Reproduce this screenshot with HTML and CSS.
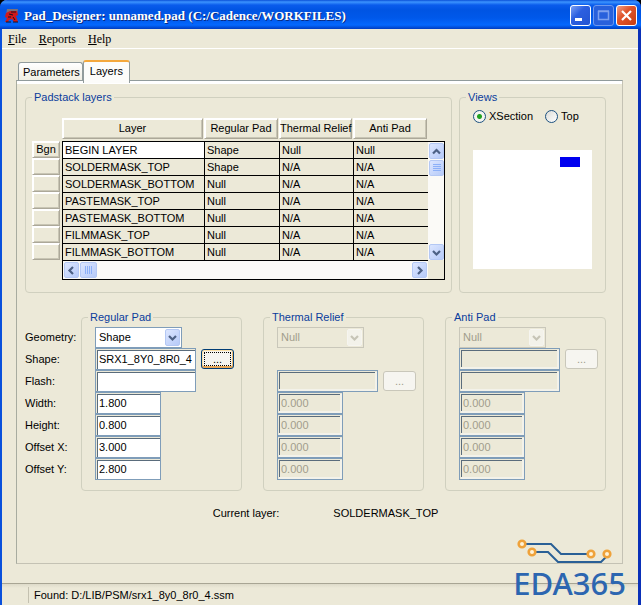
FILE: index.html
```html
<!DOCTYPE html>
<html lang="en">
<head>
    <meta charset="UTF-8">
    <meta name="viewport" content="width=device-width, initial-scale=1.0">
    <title>Pad_Designer: unnamed.pad</title>
    <link rel="stylesheet" href="styles.css">
</head>
<body>

    <div class="window">
        <header class="titlebar">
            <svg class="app-icon" width="14" height="14" viewBox="0 0 14 14">
                <path d="M2 0h11l-1 6H1z" fill="#7d7078"/>
                <path d="M1 4l4 -2 7 0 1 4 -2 1 2 6h-4l-2 -3 -3 1 -1 2H0l2 -4 -2 -1z" fill="#d01818"/>
                <path d="M4 5l4 1M8 8l2 3M3 8l3 0M6 3l5 0M1 13h5M8 13h5" stroke="#1a1020" stroke-width="1"/>
            </svg>
            <h1>Pad_Designer: unnamed.pad (C:/Cadence/WORKFILES)</h1>
            <button class="win-btn" aria-label="Minimize">
                <svg width="19" height="19" viewBox="0 0 19 19"><path d="M4 13.500h7" stroke="#fff" stroke-width="3"/></svg>
            </button>
            <button class="win-btn dim" aria-label="Maximize" disabled>
                <svg width="19" height="19" viewBox="0 0 19 19"><path d="M4.500 5.500h10v8h-10zM4 5h11" stroke="#7da0ee" stroke-width="1.500" fill="none"/></svg>
            </button>
            <button class="win-btn close" aria-label="Close">
                <svg width="19" height="19" viewBox="0 0 19 19"><path d="M5 5l9 9M14 5l-9 9" stroke="#fff" stroke-width="2.200"/></svg>
            </button>
        </header>

        <nav class="menu">
            <a href="#"><u>F</u>ile</a>
            <a href="#"><u>R</u>eports</a>
            <a href="#"><u>H</u>elp</a>
        </nav>

        <main class="client">
            <div class="tabs" role="tablist">
                <button class="tab" role="tab">Parameters</button>
                <button class="tab active" role="tab" aria-selected="true">Layers</button>
            </div>

            <div class="panel">
                <div class="top-row">
                    <fieldset class="layers">
                        <legend>Padstack layers</legend>
                        <div class="layer-grid">
                            <table>
                                <colgroup>
                                    <col class="col-mark">
                                    <col>
                                    <col class="col-pad">
                                    <col class="col-thermal">
                                    <col class="col-pad">
                                </colgroup>
                                <thead>
                                    <tr>
                                        <td></td>
                                        <th><span>Layer</span></th>
                                        <th><span>Regular Pad</span></th>
                                        <th><span>Thermal Relief</span></th>
                                        <th><span>Anti Pad</span></th>
                                    </tr>
                                </thead>
                                <tbody>
                                    <tr><th><button>Bgn</button></th><td class="current">BEGIN LAYER</td><td>Shape</td><td>Null</td><td>Null</td></tr>
                                    <tr><th><button></button></th><td>SOLDERMASK_TOP</td><td>Shape</td><td>N/A</td><td>N/A</td></tr>
                                    <tr><th><button></button></th><td>SOLDERMASK_BOTTOM</td><td>Null</td><td>N/A</td><td>N/A</td></tr>
                                    <tr><th><button></button></th><td>PASTEMASK_TOP</td><td>Null</td><td>N/A</td><td>N/A</td></tr>
                                    <tr><th><button></button></th><td>PASTEMASK_BOTTOM</td><td>Null</td><td>N/A</td><td>N/A</td></tr>
                                    <tr><th><button></button></th><td>FILMMASK_TOP</td><td>Null</td><td>N/A</td><td>N/A</td></tr>
                                    <tr><th><button></button></th><td>FILMMASK_BOTTOM</td><td>Null</td><td>N/A</td><td>N/A</td></tr>
                                </tbody>
                            </table>
                            <div class="vscroll">
                                <button class="scroll-btn" aria-label="Scroll up"><svg width="9" height="9" viewBox="0 0 9 9"><path d="M1 6.500l3.500-3.500L8 6.500"/></svg></button>
                                <div class="thumb"><svg width="8" height="8" viewBox="0 0 8 8"><path d="M0 .5h8M0 2.500h8M0 4.500h8M0 6.500h8"/></svg></div>
                                <button class="scroll-btn last" aria-label="Scroll down"><svg width="9" height="9" viewBox="0 0 9 9"><path d="M1 3l3.500 3.500L8 3"/></svg></button>
                            </div>
                            <div class="hscroll">
                                <button class="scroll-btn" aria-label="Scroll left"><svg width="9" height="9" viewBox="0 0 9 9"><path d="M6 1L2.500 4.500 6 8"/></svg></button>
                                <div class="thumb"><svg width="8" height="8" viewBox="0 0 8 8"><path d="M.5 0v8M2.500 0v8M4.500 0v8M6.500 0v8"/></svg></div>
                                <button class="scroll-btn last" aria-label="Scroll right"><svg width="9" height="9" viewBox="0 0 9 9"><path d="M3 1l3.500 3.500L3 8"/></svg></button>
                            </div>
                            <div class="corner"></div>
                        </div>
                    </fieldset>

                    <fieldset class="views">
                        <legend>Views</legend>
                        <div class="radios">
                            <label><input type="radio" name="view" checked>XSection</label>
                            <label><input type="radio" name="view">Top</label>
                        </div>
                        <svg class="preview" width="119" height="119" viewBox="0 0 119 119">
                            <rect width="119" height="119" fill="#fff"/>
                            <rect x="87" y="7" width="20" height="10" fill="#0000f0"/>
                        </svg>
                    </fieldset>
                </div>

                <div class="pads">
                    <div class="labels">
                        <label for="geometry">Geometry:</label>
                        <label for="shape">Shape:</label>
                        <label for="flash">Flash:</label>
                        <label for="width">Width:</label>
                        <label for="height">Height:</label>
                        <label for="offset-x">Offset X:</label>
                        <label for="offset-y">Offset Y:</label>
                    </div>

                    <fieldset class="pad">
                        <legend>Regular Pad</legend>
                        <div class="row">
                            <div class="combo">
                                <select id="geometry"><option>Shape</option></select>
                                <span class="arrow"><svg width="9" height="9" viewBox="0 0 9 9"><path d="M1 3l3.500 3.500L8 3"/></svg></span>
                            </div>
                        </div>
                        <div class="row"><input type="text" class="long" id="shape" value="SRX1_8Y0_8R0_4"><button class="browse focused">...</button></div>
                        <div class="row"><input type="text" class="long" id="flash"></div>
                        <div class="row"><input type="text" id="width" value="1.800"></div>
                        <div class="row"><input type="text" id="height" value="0.800"></div>
                        <div class="row"><input type="text" id="offset-x" value="3.000"></div>
                        <div class="row"><input type="text" id="offset-y" value="2.800"></div>
                    </fieldset>

                    <fieldset class="pad">
                        <legend>Thermal Relief</legend>
                        <div class="row">
                            <div class="combo">
                                <select aria-label="Thermal geometry" disabled><option>Null</option></select>
                                <span class="arrow"><svg width="9" height="9" viewBox="0 0 9 9"><path d="M1 3l3.500 3.500L8 3"/></svg></span>
                            </div>
                        </div>
                        <div class="row"></div>
                        <div class="row"><input type="text" class="long" aria-label="Thermal flash" disabled><button class="browse" disabled>...</button></div>
                        <div class="row"><input type="text" aria-label="Thermal width" value="0.000" disabled></div>
                        <div class="row"><input type="text" aria-label="Thermal height" value="0.000" disabled></div>
                        <div class="row"><input type="text" aria-label="Thermal offset X" value="0.000" disabled></div>
                        <div class="row"><input type="text" aria-label="Thermal offset Y" value="0.000" disabled></div>
                    </fieldset>

                    <fieldset class="pad">
                        <legend>Anti Pad</legend>
                        <div class="row">
                            <div class="combo">
                                <select aria-label="Anti pad geometry" disabled><option>Null</option></select>
                                <span class="arrow"><svg width="9" height="9" viewBox="0 0 9 9"><path d="M1 3l3.500 3.500L8 3"/></svg></span>
                            </div>
                        </div>
                        <div class="row"><input type="text" class="long" aria-label="Anti pad shape" disabled><button class="browse" disabled>...</button></div>
                        <div class="row"><input type="text" class="long" aria-label="Anti pad flash" disabled></div>
                        <div class="row"><input type="text" aria-label="Anti pad width" value="0.000" disabled></div>
                        <div class="row"><input type="text" aria-label="Anti pad height" value="0.000" disabled></div>
                        <div class="row"><input type="text" aria-label="Anti pad offset X" value="0.000" disabled></div>
                        <div class="row"><input type="text" aria-label="Anti pad offset Y" value="0.000" disabled></div>
                    </fieldset>
                </div>

                <div class="current-layer">
                    <span>Current layer:</span>
                    <span>SOLDERMASK_TOP</span>
                </div>
            </div>
        </main>

        <footer class="status"><span>Found: D:/LIB/PSM/srx1_8y0_8r0_4.ssm</span></footer>

        <div class="logo">
            <svg width="98" height="26" viewBox="0 0 98 26" fill="none">
                <path d="M9 5h25l10 10h26M19 13h12l10 10h43l5-5" stroke="#2a6096" stroke-width="2"/>
                <g fill="#fff3d8" stroke="#efa23a" stroke-width="2.600">
                    <circle cx="5" cy="5" r="3.300"/>
                    <circle cx="15" cy="13" r="3.300"/>
                    <circle cx="74" cy="15" r="3.300"/>
                    <circle cx="90" cy="15" r="3.300"/>
                </g>
            </svg>
            <span>EDA365</span>
        </div>
    </div>

</body>
</html>
```
FILE: styles.css
```css
* {
    box-sizing: border-box;
}
body {
    margin: 0;
    background: #000;
    color: #000;
    font-family: "Liberation Sans", Arial, sans-serif;
    font-size: 11px;
    line-height: 16px;
}
button, input, select {
    font: inherit;
    color: inherit;
    margin: 0;
    padding: 0;
}
.window {
    position: relative;
    display: flex;
    flex-direction: column;
    min-height: 100vh;
    background: #ece9d8;
    border-left: 2px solid #0a50dc;
    border-right: 3px solid #0a30b8;
    border-radius: 7px 7px 0 0;
}

/* title bar */
.titlebar {
    display: flex;
    align-items: center;
    gap: 2px;
    height: 29px;
    margin: 0 -3px 0 -2px;
    padding: 2px 4px 0 5px;
    border-radius: 7px 7px 0 0;
    background: linear-gradient(#0a50d8 0, #3c94ff 2px, #0a5cec 5px, #0054e3 10px, #0058ea 18px, #0468fe 25px, #003cc0 29px);
}
.titlebar h1 {
    flex: 1;
    margin: 0 0 0 3px;
    color: #fff;
    font-family: "Liberation Serif", "Times New Roman", serif;
    font-size: 13px;
    font-weight: bold;
    white-space: nowrap;
    text-shadow: 1px 1px 0 #0a2a80;
}
.win-btn {
    width: 21px;
    height: 21px;
    border: 1px solid #fff;
    border-radius: 3px;
    background: linear-gradient(135deg, #7ba0f4, #2c5fe0 40%, #2354d2);
}
.win-btn svg {
    display: block;
}
.win-btn.dim {
    border-color: #6e98ee;
    background: #2860dc;
}
.win-btn.close {
    background: linear-gradient(135deg, #f0a088, #e0552c 40%, #c83c10);
}

/* menu */
.menu {
    display: flex;
    gap: 12px;
    height: 20px;
    padding: 2px 6px;
    border-bottom: 1px solid #fff;
    font-family: "Liberation Serif", "Times New Roman", serif;
    font-size: 12px;
}
.menu a {
    color: #000;
    text-decoration: none;
}

/* tabs */
.client {
    display: flex;
    flex: 1;
    flex-direction: column;
    padding: 11px 15px 19px 14px;
}
.tabs {
    display: flex;
    align-items: flex-end;
    height: 20px;
    padding-left: 2px;
}
.tab {
    height: 18px;
    padding: 0 2px 0 4px;
    border: 1px solid #919b9c;
    border-bottom: none;
    border-radius: 3px 3px 0 0;
    background: linear-gradient(#fff, #f0eee4);
}
.tab.active {
    z-index: 1;
    height: 23px;
    margin-bottom: -3px;
    padding: 0 6px 4px;
    border-top: 2px solid #f4a83c;
    background: #fcfcfa;
}
.panel {
    flex: 1;
    padding: 8px 16px 0 8px;
    border: 1px solid #a8aca0;
    border-top-color: #919b9c;
    border-right-color: #c4c2b4;
    border-bottom-color: #c4c2b4;
    box-shadow: inset 0 3px 0 #fff;
}

/* group boxes */
fieldset {
    min-width: 0;
    margin: 0;
    border: 1px solid #d0d0bf;
    border-radius: 4px;
}
legend {
    margin-left: -7px;
    padding: 0 2px;
    color: #0a3c9c;
}
.top-row {
    display: flex;
    gap: 7px;
}
.layers {
    flex: 1;
    padding: 13px 6px 12px;
}
.layers legend {
    margin-left: 0;
}
.views {
    width: 147px;
    padding: 3px 13px;
}
.radios {
    display: flex;
    gap: 12px;
    margin-bottom: 26px;
}
.radios label {
    display: flex;
    align-items: center;
    gap: 3px;
}
input[type="radio"] {
    appearance: none;
    width: 13px;
    height: 13px;
    border: 1px solid #1c5180;
    border-radius: 50%;
    background: linear-gradient(135deg, #dcdcd7, #fff);
}
input[type="radio"]:checked {
    background: radial-gradient(circle, #21a121 0 2px, #f4f4f0 3px);
}
.preview {
    display: block;
}

/* layer table */
.layer-grid {
    display: grid;
    grid-template-columns: 1fr 17px;
}
table {
    width: 100%;
    table-layout: fixed;
    border-spacing: 0;
}
.col-mark {
    width: 30px;
}
.col-pad {
    width: 75px;
}
.col-thermal {
    width: 74px;
}
th, td {
    padding: 0;
    font-weight: normal;
    white-space: nowrap;
}
thead th {
    height: 23px;
    padding: 0 1px 2px 0;
}
thead span, tbody button {
    display: block;
    border: 1px solid;
    border-color: #fff #aca899 #aca899 #fff;
    box-shadow: inset 1px 1px 0 #fff, inset -1px -1px 0 #c8c5b4;
    background: #ece9d8;
}
thead span {
    height: 21px;
    line-height: 19px;
}
tbody th {
    padding-right: 2px;
}
tbody button {
    width: 100%;
    height: 17px;
    line-height: 15px;
}
tbody td {
    height: 17px;
    padding-left: 2px;
    border-top: 1px solid #000;
    border-left: 1px solid #000;
}
tbody td.current {
    background: #fff;
}
.vscroll {
    display: flex;
    flex-direction: column;
    gap: 1px;
    margin-top: 23px;
    padding: 1px 1px 0;
    border: 1px solid #000;
    border-width: 1px 1px 0 0;
    background: #fbfaf7;
}
.hscroll {
    display: flex;
    gap: 1px;
    height: 20px;
    margin-left: 30px;
    padding: 1px;
    border: 1px solid #000;
    border-right: none;
    background: #fbfaf7;
}
.corner {
    border: 1px solid #000;
    border-width: 0 1px 1px 0;
}
.scroll-btn, .thumb, .arrow {
    display: flex;
    align-items: center;
    justify-content: center;
    width: 15px;
    height: 16px;
    border: 1px solid #b4c8f4;
    border-radius: 2px;
    background: linear-gradient(135deg, #dce6ff, #b6caf8);
}
.hscroll .thumb {
    width: 17px;
}
.vscroll .last {
    margin-top: auto;
}
.hscroll .last {
    margin-left: auto;
}
.scroll-btn path, .arrow path {
    fill: none;
    stroke: #4d6185;
    stroke-width: 2.200;
}
.thumb path {
    stroke: #8cb0f8;
}

/* pad parameters */
.pads {
    display: flex;
    gap: 21px;
    margin-top: 16px;
}
.labels {
    display: flex;
    flex-direction: column;
    width: 56px;
    margin-right: -21px;
    padding-top: 17px;
}
.labels label {
    line-height: 22px;
}
.pad {
    flex: 1;
    padding: 1px 0 10px 13px;
}
.row {
    display: flex;
    align-items: center;
    gap: 5px;
    height: 22px;
}
.combo {
    position: relative;
    width: 87px;
    height: 21px;
}
select {
    appearance: none;
    width: 100%;
    height: 100%;
    padding-left: 3px;
    border: 1px solid #7f9db9;
    border-radius: 0;
    background: #fff;
}
.arrow {
    position: absolute;
    top: 2px;
    right: 2px;
    height: 17px;
    pointer-events: none;
}
input[type="text"] {
    width: 66px;
    height: 22px;
    padding: 0 0 0 3px;
    border: 1px solid #7f9db9;
    background: #fff;
    box-shadow: inset 1px 1px 0 #ece9d8, inset 2px 2px 0 #5a6c7c;
}
input[type="text"].long {
    width: 101px;
}
input[type="text"]:disabled {
    color: #a19d8c;
    background: #ece9d8;
    box-shadow: inset 1px 1px 0 #ece9d8, inset -2px -2px 0 #f3f2ea, inset 2px 2px 0 #5a6c7c;
}
select:disabled {
    opacity: 1;
    border-color: #c9c7ba;
    color: #a19d8c;
    background: #ece9d8;
}
select:disabled + .arrow {
    border-color: #f6f5f0;
    background: #f3f2ea;
}
select:disabled + .arrow path {
    stroke: #c6c4b6;
}
.browse {
    width: 33px;
    height: 20px;
    border: 1px solid #003c74;
    border-radius: 3px;
    background: #f6f5f0;
}
.browse.focused {
    outline: 1px dotted #000;
    outline-offset: -4px;
    box-shadow: inset 0 -2px 0 #e8a858, inset 1px 1px 0 #fbe0a8, inset -1px 0 0 #f0bc70;
}
.browse:disabled {
    border-color: #c9c7ba;
    color: #a19d8c;
}
.current-layer {
    display: flex;
    justify-content: center;
    gap: 54px;
    margin: 14px 0 0 20px;
}

/* status bar */
.status {
    height: 22px;
    padding: 3px 0 0 26px;
    border-top: 1px solid #a8a594;
    background: linear-gradient(#dedbca, #ece9d8 4px);
}
.status span {
    display: block;
    padding-left: 5px;
    border-left: 1px solid #c4c1b0;
}

.logo {
    position: absolute;
    right: 12px;
    bottom: 4px;
    display: flex;
    flex-direction: column;
    color: #2c66b0;
}
.logo svg {
    margin-left: 4px;
}
.logo span {
    font-family: "Noto Sans", "Open Sans", sans-serif;
    font-size: 31px;
    font-weight: 500;
    line-height: 36px;
}
```
